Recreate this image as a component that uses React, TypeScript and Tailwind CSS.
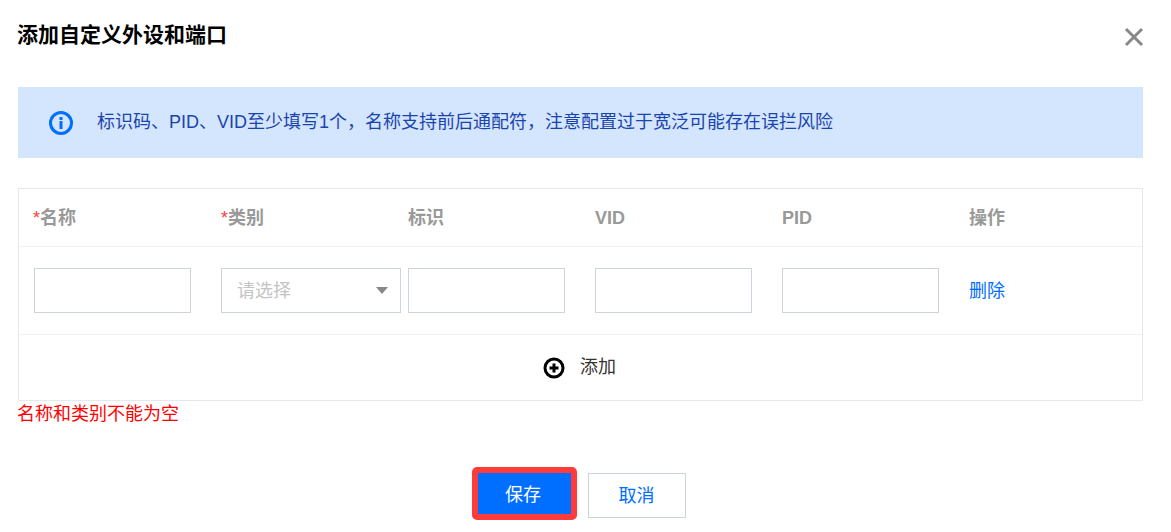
const fontStack = { fontFamily: '"Liberation Sans", "Noto Sans CJK SC", sans-serif' };

const columns = [
  { label: '名称', required: true, shift: true },
  { label: '类别', required: true },
  { label: '标识' },
  { label: 'VID' },
  { label: 'PID' },
  { label: '操作' },
];

function TextInput() {
  return <div className="w-[157px] h-[45px] border border-[#cdd3df] bg-white" />;
}

function Cell({ children }: { children: React.ReactNode }) {
  return <div className="w-[187px] shrink-0 flex items-center">{children}</div>;
}

export default function App() {
  return (
    <div className="w-[1171px] h-[532px] bg-white overflow-hidden px-[18px] pr-[28px] text-[18px] leading-none" style={fontStack}>
      {/* Title */}
      <div className="h-[87px] flex justify-between">
        <div className="mt-[24px] -ml-[1px] text-[21px] leading-[22px] font-bold text-black">添加自定义外设和端口</div>
        <svg className="mt-[27px] -mr-[1px]" width="20" height="20" viewBox="0 0 20 20" fill="none">
          <path d="M2 2 L18 18 M18 2 L2 18" stroke="#888888" strokeWidth="3" />
        </svg>
      </div>

      {/* Notice */}
      <div className="h-[71px] bg-[#d4e5fe] flex items-center pl-[31px]">
        <svg width="24" height="24" viewBox="0 0 24 24" fill="none">
          <circle cx="12" cy="12" r="10.5" stroke="#006eff" strokeWidth="3" />
          <rect x="10.5" y="10" width="3" height="8" fill="#006eff" />
          <rect x="10.5" y="6" width="3" height="3" fill="#006eff" />
        </svg>
        <span className="ml-[24px] -mt-[1px] text-[#1a44ad]">标识码、PID、VID至少填写1个，名称支持前后通配符，注意配置过于宽泛可能存在误拦风险</span>
      </div>

      {/* Table */}
      <div className="mt-[30px] h-[213px] border border-[#e5e8ef] flex flex-col">
        <div className="h-[58px] shrink-0 border-b border-[#f0f2f5] flex items-center pl-[15px]">
          {columns.map((col) => (
            <Cell key={col.label}>
              <span className={col.shift ? 'font-bold text-[#999999] -ml-[1px]' : 'font-bold text-[#999999]'}>
                {col.required && <span className="text-[#ff3b3b] font-normal">*</span>}
                {col.label}
              </span>
            </Cell>
          ))}
        </div>
        <div className="h-[88px] shrink-0 border-b border-[#f0f2f5] flex items-center pl-[15px]">
          <Cell><TextInput /></Cell>
          <Cell>
            <div className="w-[180px] h-[45px] border border-[#cdd3df] flex items-center justify-between pl-[15px] pr-[12px]">
              <span className="text-[#c4c4c4]">请选择</span>
              <span className="w-0 h-0 border-x-[6px] border-x-transparent border-t-[7px] border-t-[#888888]" />
            </div>
          </Cell>
          <Cell><TextInput /></Cell>
          <Cell><TextInput /></Cell>
          <Cell><TextInput /></Cell>
          <Cell><span className="text-[#006eff]">删除</span></Cell>
        </div>
        <div className="flex-1 flex items-center justify-center gap-[15px] pr-[2px]">
          <svg width="22" height="22" viewBox="0 0 22 22" fill="none">
            <circle cx="11" cy="11" r="9" stroke="#000000" strokeWidth="3" />
            <path d="M11 6.5 V15.5 M6.5 11 H15.5" stroke="#000000" strokeWidth="3" />
          </svg>
          <span className="text-[#333333] -mt-[2px]">添加</span>
        </div>
      </div>

      {/* Error */}
      <div className="mt-[4px] -ml-[1px] h-[18px] leading-[18px] text-[#ff0000]">名称和类别不能为空</div>

      {/* Actions */}
      <div className="mt-[44px] flex justify-center items-start pr-[3px]">
        <button className="w-[105px] h-[53px] border-[6px] border-[#ff3b3b] rounded-[5px] bg-[#006eff] text-white pt-[3px] pr-[3px]">保存</button>
        <button className="ml-[11px] mt-[6px] w-[98px] h-[45px] border border-[#cdd3df] bg-white text-[#006eff] pr-[1px]">取消</button>
      </div>
    </div>
  );
}
